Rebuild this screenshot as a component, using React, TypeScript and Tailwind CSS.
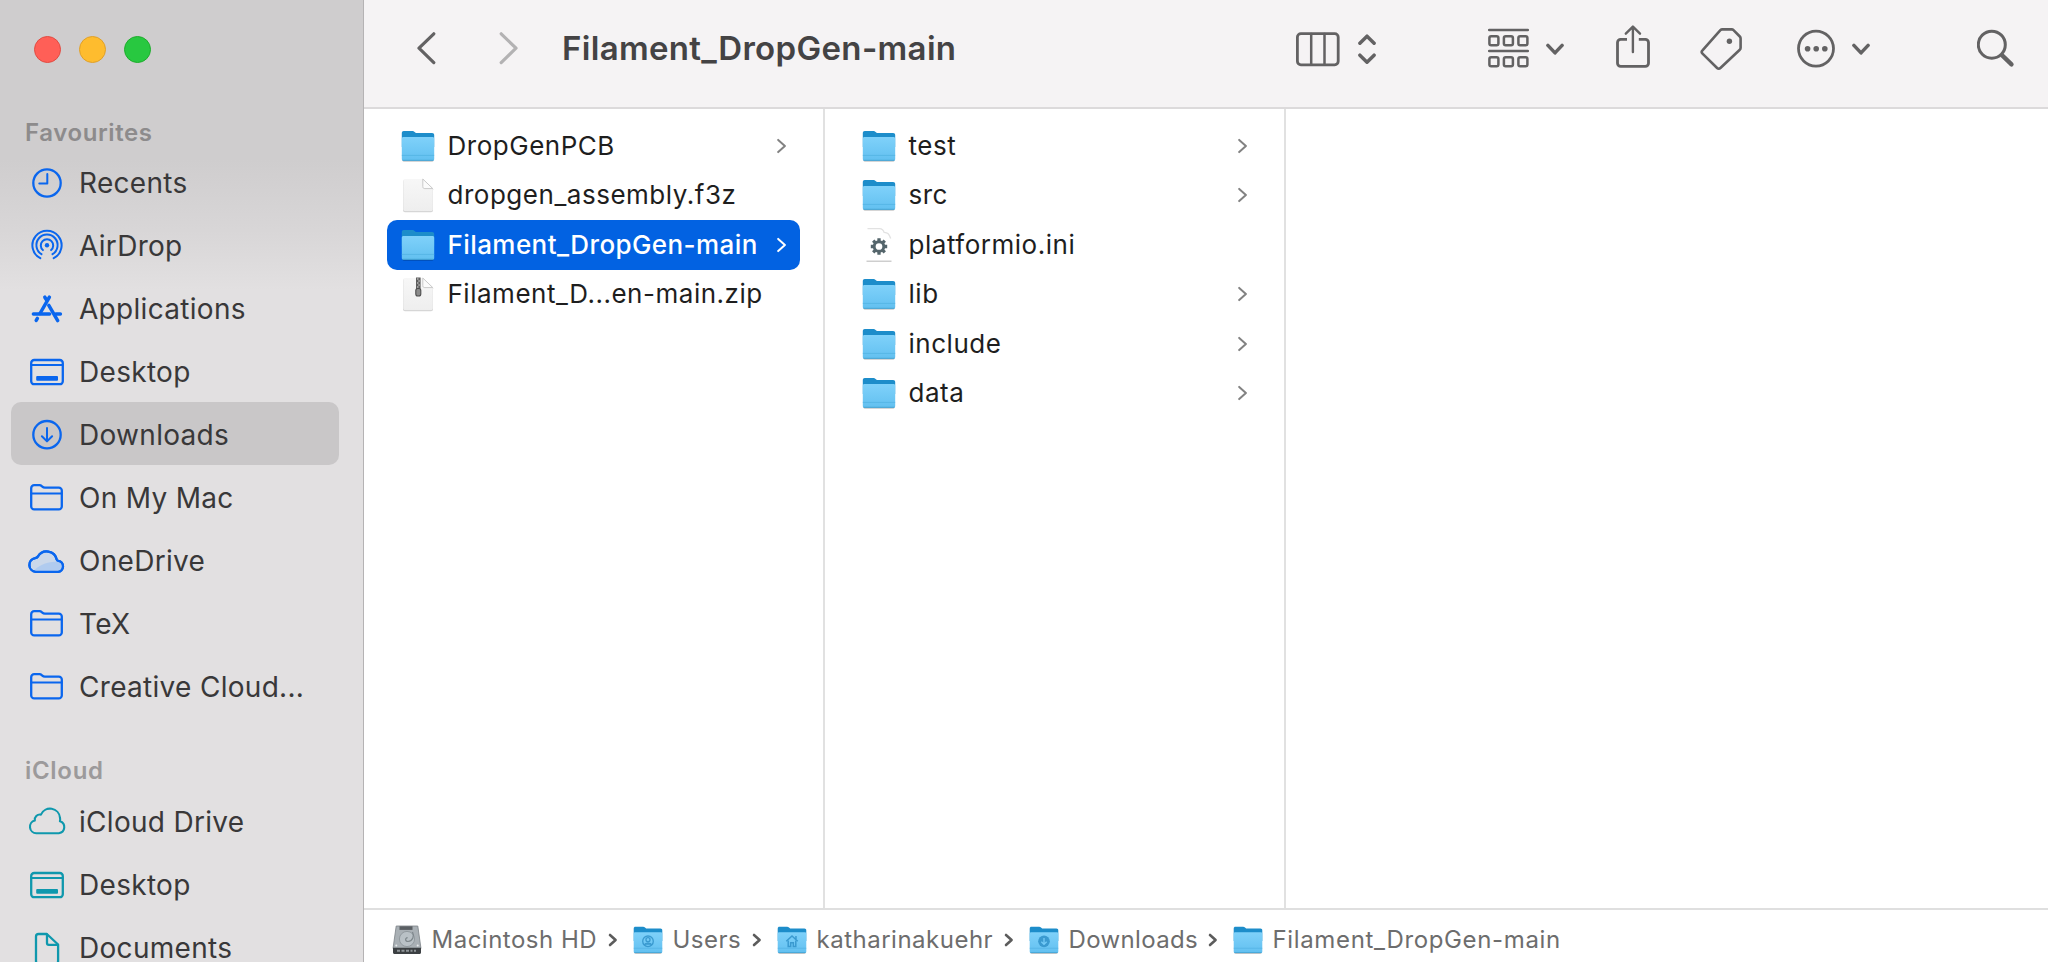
import type { ReactNode } from "react";

const BLUE = "#0a66ee";
const TEAL = "#0f98ad";
const INK = "#636263";

/* ---------- sidebar icons (40 x 40) ---------- */

function SideIcon({ color = BLUE, children }: { color?: string; children: ReactNode }) {
  return (
    <svg
      width="40"
      height="40"
      viewBox="0 0 40 40"
      fill="none"
      stroke={color}
      strokeWidth="2.3"
      strokeLinecap="round"
      strokeLinejoin="round"
      className="shrink-0"
    >
      {children}
    </svg>
  );
}

const RecentsIcon = () => (
  <SideIcon>
    <circle cx="20" cy="20" r="13.7" />
    <path d="M20.3 11v9.6h-8" strokeWidth="2" />
  </SideIcon>
);

const AirDropIcon = () => (
  <SideIcon>
    <g strokeWidth="2">
      <path d="M13.3 32.2A14.6 14.6 0 1 1 26.7 32.2" />
      <path d="M14.5 28.2A10.6 10.6 0 1 1 25.5 28.2" />
      <path d="M15.9 24.1A6.2 6.2 0 1 1 24.1 24.1" />
    </g>
    <circle cx="20" cy="19.3" r="2.2" fill={BLUE} stroke="none" />
  </SideIcon>
);

const ApplicationsIcon = () => (
  <SideIcon>
    <g strokeWidth="3.5">
      <path d="M17.8 8.2l2.3 3.6M22.4 8.2L13 24.5" />
      <path d="M6.4 24.9h16.2M28.8 24.9h4.6" />
      <path d="M21.8 16.4l8.9 15.2M10.4 29.4l-1.2 2" />
    </g>
  </SideIcon>
);

const DesktopIcon = ({ color = BLUE }: { color?: string }) => (
  <SideIcon color={color}>
    <rect x="4.2" y="8" width="31.6" height="24.2" rx="3" />
    <path d="M4.5 13h31" strokeWidth="1.8" />
    <rect x="9.2" y="24" width="21.8" height="4.8" rx="1" fill={color} stroke="none" />
  </SideIcon>
);

const DownloadsIcon = () => (
  <SideIcon>
    <circle cx="20" cy="19.7" r="13.7" />
    <path d="M20 13v13M14.9 21.2l5.1 5.2 5.1-5.2" strokeWidth="2" />
  </SideIcon>
);

const FolderOutlineIcon = () => (
  <SideIcon>
    <path d="M4.200 10.200a3 3 0 0 1 3-3h5.200c1.200 0 1.800.4 2.600 1.100 1 .9 1.600 1.300 3 1.300h13.800a3 3 0 0 1 3 3v15.800a3 3 0 0 1-3 3H7.200a3 3 0 0 1-3-3z" />
    <path d="M4.400 15.400h30.200" strokeWidth="2" />
  </SideIcon>
);

const cloudPath =
  "M8.800 30.800a6.900 6.900 0 0 1-.6-13.700c1.200-.1 1.900-.5 2.700-1.600a10.200 10.200 0 0 1 18.800 3c.3 1 .8 1.300 1.700 1.400a5.500 5.500 0 0 1-.4 10.900z";

const OneDriveIcon = () => (
  <SideIcon>
    <path d={cloudPath} fill="#cbd8ea" />
    <path d="M7.500 29c4-4 9-6.400 14.500-7.500 3-.8 6-1.200 9.500-.5a4.600 4.600 0 0 1-.5 8.900H9z" fill="#b0cbef" stroke="none" />
    <path d={cloudPath} />
  </SideIcon>
);

const ICloudIcon = () => (
  <SideIcon color={TEAL}>
    <path
      d="M9.300 31.200a6.400 6.400 0 0 1-1.500-12.600 5.200 5.200 0 0 1 6.100-6A10 10 0 0 1 33 15.800c.3 1.300.2 2.400-.1 3.500A6.100 6.100 0 0 1 31.900 31.200z"
      strokeWidth="2.100"
    />
  </SideIcon>
);

const DocumentIcon = () => (
  <SideIcon color={TEAL}>
    <path d="M11.600 6h8.200l11.300 10.500v16.600a2.600 2.600 0 0 1-2.600 2.600H11.600A2.600 2.600 0 0 1 9 33.100V8.600A2.600 2.600 0 0 1 11.600 6z" />
    <path d="M20 6.500v8.600a1.800 1.800 0 0 0 1.800 1.800h9" />
  </SideIcon>
);

/* ---------- file icons ---------- */

function FolderIcon({ size = 34, glyph }: { size?: number; glyph?: ReactNode }) {
  return (
    <svg width={size} height={size} viewBox="0 0 34 34" className="shrink-0">
      <rect x="1.500" y="29.500" width="31" height="3.300" rx="1.500" fill="#000" opacity=".22" />
      <path d="M.8 4.200c0-1.500.8-2.200 2-2.200h8.600c1 0 1.600.3 2.200.9l1.300 1.200h16.200c1.300 0 2.100.8 2.100 2v12H.8z" fill="#1d8dca" />
      <path d="M.8 9.700c0-1 .7-1.600 1.700-1.600h29c1 0 1.700.6 1.700 1.600v20.400c0 1.100-.7 1.700-1.700 1.700h-29c-1 0-1.700-.6-1.700-1.700z" fill="url(#folder-face)" />
      <path d="M.8 26.400h32.400" stroke="#4fb1e1" strokeWidth=".7" />
      <path d="M1.500 31.300h31" stroke="#3f9fd0" strokeWidth=".9" />
      {glyph}
    </svg>
  );
}

function PageIcon({ children }: { children?: ReactNode }) {
  return (
    <svg width="34" height="36" viewBox="0 0 34 36" className="shrink-0">
      <path d="M4 2h18.500l9.500 9.500v21c0 1.200-.7 2-2 2H4c-1.200 0-2-.8-2-2V4c0-1.200.8-2 2-2z" fill="#000" opacity=".16" transform="translate(0 .7)" />
      <path d="M4.200 2h18l9.600 9.500v20.800c0 1.100-.7 1.800-1.900 1.800H4.200c-1.100 0-1.900-.7-1.900-1.800V3.800c0-1.100.8-1.800 1.900-1.800z" fill="url(#page-face)" />
      <path d="M21.800 2v7.600c0 1.300.7 2 2 2h8z" fill="#fbfbfb" stroke="#c9c9c9" strokeWidth="1" />
      {children}
    </svg>
  );
}

const ZipIcon = () => (
  <PageIcon>
    <rect x="15" y="1.500" width="4.600" height="13" fill="#5d5d5d" />
    <path d="M16 3h1.500M17.300 5h1.500M16 7h1.500M17.300 9h1.500M16 11h1.500" stroke="#e2e2e2" strokeWidth="1" />
    <rect x="14.800" y="12.500" width="5" height="7.500" rx="2" fill="#8b8b8b" stroke="#4d4d4d" strokeWidth="1.100" />
  </PageIcon>
);

const ConfigIcon = () => (
  <svg width="34" height="36" viewBox="0 0 34 36" className="shrink-0">
    <path d="M5.500 1.600h12c3 .2 4 1.500 4.600 3.700 3.800.2 5 1.800 6.600 6.200" fill="none" stroke="#e2e2e2" strokeWidth="1.300" />
    <path d="M4.500 34.200h25" stroke="#c2c2c2" strokeWidth="1.200" />
    <g fill="none" stroke="#54656b">
      <circle cx="17" cy="19.500" r="4.800" strokeWidth="2.900" />
      <g strokeWidth="3.300">
        <path d="M17 11.300v3M17 24.700v3M8.800 19.500h3M22.200 19.500h3" />
        <path d="M11.200 13.700l2 2M20.800 23.300l2 2M22.800 13.700l-2 2M13.200 23.300l-2 2" />
      </g>
    </g>
  </svg>
);

const DiskIcon = () => (
  <svg width="30" height="30" viewBox="0 0 30 30" className="shrink-0">
    <path d="M4.200 1h21.600l3.200 22.500H1z" fill="#a9b0b5" stroke="#7b8287" strokeWidth=".8" />
    <path d="M1 22.800h28v4.700c0 .9-.6 1.500-1.500 1.500h-25C1.600 29 1 28.400 1 27.500z" fill="#3c4043" />
    <rect x="7.500" y="1.300" width="13" height="3.600" fill="#5a5f63" />
    <circle cx="15" cy="14" r="7.600" fill="#b9c1c6" stroke="#929a9f" strokeWidth="1" />
    <path d="M20.500 7c2 4 .5 9-4.500 9.500-3 0-3.200-3.800-.4-3.800" fill="none" stroke="#7d868b" strokeWidth="1.200" />
    <path d="M5 25.800h3M9.500 25.800h3M14 25.800h3M18.500 25.800h2M22 25.800h2" stroke="#8f9599" strokeWidth="2" />
    <circle cx="4.300" cy="20.500" r="1" fill="#e7eaec" />
    <circle cx="25.700" cy="20.500" r="1" fill="#e7eaec" />
  </svg>
);

const userGlyph = (
  <g fill="none" stroke="#3a9ad0" strokeWidth="1.500">
    <circle cx="17" cy="18.500" r="6" />
    <path d="M12.800 22.500c1.500-2.500 7-2.500 8.400 0" fill="#3a9ad0" />
    <circle cx="17" cy="16.700" r="2.300" />
  </g>
);
const homeGlyph = (
  <g fill="none" stroke="#3a9ad0" strokeWidth="1.700">
    <path d="M10.500 18.500l6.500-6 6.500 6M21.500 12.500v3.500" />
    <path d="M12.700 17.500v7h2.800v-4.300h3v4.300h2.800v-7" />
  </g>
);
const downGlyph = (
  <g>
    <circle cx="17" cy="18.500" r="6.600" fill="#3a9ad0" />
    <path d="M17 14.800v7M14 19l3 3 3-3" fill="none" stroke="#74cbf7" strokeWidth="1.500" />
  </g>
);

/* ---------- toolbar icons (48 tall) ---------- */

function ToolIcon({ width, className = "", color = INK, children }: { width: number; className?: string; color?: string; children: ReactNode }) {
  return (
    <svg
      width={width}
      height="48"
      viewBox={`0 0 ${width} 48`}
      fill="none"
      stroke={color}
      strokeWidth="2.800"
      strokeLinecap="round"
      strokeLinejoin="round"
      className={`shrink-0 ${className}`}
    >
      {children}
    </svg>
  );
}

const DownCaret = ({ className }: { className: string }) => (
  <ToolIcon width={18} className={className}>
    <path d="M1.900 21.400L9 28.900l7.100-7.500" strokeWidth="3.500" />
  </ToolIcon>
);

const RowChevron = ({ selected }: { selected?: boolean }) => (
  <svg width="10" height="16" viewBox="0 0 10 16" fill="none" className="ml-auto shrink-0">
    <path d="M1.200 1.900L7.900 8l-6.700 6.100" stroke={selected ? "#ffffff" : "#828282"} strokeWidth="2" strokeLinecap="round" strokeLinejoin="round" />
  </svg>
);

/* ---------- sidebar ---------- */

type SideEntry = { label: string; icon: ReactNode; active?: boolean };

const favourites: SideEntry[] = [
  { label: "Recents", icon: <RecentsIcon /> },
  { label: "AirDrop", icon: <AirDropIcon /> },
  { label: "Applications", icon: <ApplicationsIcon /> },
  { label: "Desktop", icon: <DesktopIcon /> },
  { label: "Downloads", icon: <DownloadsIcon />, active: true },
  { label: "On My Mac", icon: <FolderOutlineIcon /> },
  { label: "OneDrive", icon: <OneDriveIcon /> },
  { label: "TeX", icon: <FolderOutlineIcon /> },
  { label: "Creative Cloud...", icon: <FolderOutlineIcon /> },
];

const icloud: SideEntry[] = [
  { label: "iCloud Drive", icon: <ICloudIcon /> },
  { label: "Desktop", icon: <DesktopIcon color={TEAL} /> },
  { label: "Documents", icon: <DocumentIcon /> },
];

const SideList = ({ items }: { items: SideEntry[] }) => (
  <ul className="ml-[11px] w-[328px]">
    {items.map((item) => (
      <li
        key={item.label}
        className={`flex h-[63px] items-center rounded-[10px] pt-[2px] pl-4 ${item.active ? "bg-[#c9c7c8]" : ""}`}
      >
        {item.icon}
        <span className="ml-[12px] text-[28px] leading-none tracking-[0.3px] whitespace-nowrap text-[#393839]">{item.label}</span>
      </li>
    ))}
  </ul>
);

const Sidebar = () => (
  <aside className="flex h-full w-[364px] shrink-0 flex-col overflow-hidden border-r border-[#b5b3b4] bg-[linear-gradient(180deg,#cfcdce_0px,#cfcdce_160px,#d8d6d7_230px,#e2e0e1_290px,#e2e0e1_100%)]">
    <div className="flex h-[98px] shrink-0 items-center gap-[18px] pl-[34px]">
      <span className="size-[27px] rounded-full border border-[#e24b41] bg-[#ff5f57]" />
      <span className="size-[27px] rounded-full border border-[#e0a028] bg-[#febc2e]" />
      <span className="size-[27px] rounded-full border border-[#1dad2b] bg-[#28c840]" />
    </div>
    <h2 className="mt-[14px] flex h-[38px] shrink-0 items-center pt-[4px] pl-[25px] text-[24px] leading-none font-semibold tracking-[0.6px] text-[#8d8b8c]">
      Favourites
    </h2>
    <SideList items={favourites} />
    <h2 className="flex h-[72px] shrink-0 items-center pt-[36px] pl-[25px] text-[24px] leading-none font-semibold tracking-[0.7px] text-[#9c9a9b]">
      iCloud
    </h2>
    <SideList items={icloud} />
  </aside>
);

/* ---------- toolbar ---------- */

const Toolbar = () => (
  <header className="flex h-[109px] shrink-0 items-start border-b-2 border-[#dcdadb] bg-[#f5f3f4] pt-6">
    <ToolIcon width={20} className="ml-[52px]">
      <path d="M17.800 9.800L3 24.200l14.800 14.400" strokeWidth="3.200" />
    </ToolIcon>
    <ToolIcon width={20} className="ml-[62.500px]" color="#b3b2b3">
      <path d="M2.200 9.800L17 24.200 2.200 38.600" strokeWidth="3.200" />
    </ToolIcon>
    <h1 className="ml-[43.500px] flex h-[49px] w-[734px] items-center text-[33px] leading-none font-semibold tracking-[0.33px] whitespace-nowrap text-[#444344]">
      Filament_DropGen-main
    </h1>
    <ToolIcon width={44}>
      <rect x="1.400" y="9.600" width="40.800" height="31.200" rx="3.500" />
      <path d="M15.200 10v30.500M28.500 10v30.500" strokeWidth="2.500" />
    </ToolIcon>
    <ToolIcon width={18} className="ml-[18px]">
      <path d="M1.900 19.200L9 12.200l7.100 7M1.900 31.200L9 38.200l7.100-7" strokeWidth="3.500" />
    </ToolIcon>
    <ToolIcon width={42} className="ml-[112px]">
      <path d="M1.200 6h38.600M1.200 27h38.600" strokeWidth="2.500" />
      {[1.4, 15.9, 30.4].map((x) => (
        <g key={x} strokeWidth="2.500">
          <rect x={x} y="12.200" width="9" height="9" rx="1.800" />
          <rect x={x} y="33.300" width="9" height="9" rx="1.800" />
        </g>
      ))}
    </ToolIcon>
    <DownCaret className="ml-[16px]" />
    <ToolIcon width={34} className="ml-[51.500px]">
      <path d="M11 15.400H4.700a3.200 3.200 0 0 0-3.200 3.200v20.600a3.200 3.200 0 0 0 3.200 3.200h24.600a3.200 3.200 0 0 0 3.200-3.200V18.600a3.200 3.200 0 0 0-3.200-3.200H22.800" strokeLinecap="butt" />
      <path d="M16.900 28V3.500M9.800 9.700l7.100-7.100 7.100 7.100" strokeWidth="2.400" />
    </ToolIcon>
    <ToolIcon width={44} className="ml-[50px]">
      <path d="M22.300 5.400h9.400c.8 0 1.300.2 1.800.7l6.300 6.400c.6.600.8 1.100.8 1.900v9.400c0 .8-.2 1.400-.8 1.900L20.400 44c-1 1-2.300 1-3.300 0L2.500 29.600c-1-1-1-2.300 0-3.300L20.400 6.200c.600-.600 1.100-.800 1.900-.800z" strokeWidth="2.600" />
      <circle cx="29.400" cy="17.200" r="2.700" fill={INK} stroke="none" />
    </ToolIcon>
    <ToolIcon width={38} className="ml-[53px]">
      <circle cx="19" cy="24.600" r="17.500" />
      <g fill={INK} stroke="none">
        <circle cx="10.600" cy="24.700" r="2.800" />
        <circle cx="19.200" cy="24.700" r="2.800" />
        <circle cx="27.800" cy="24.700" r="2.800" />
      </g>
    </ToolIcon>
    <DownCaret className="ml-[17px]" />
    <ToolIcon width={38} className="ml-[107.500px]">
      <circle cx="14.800" cy="20.700" r="13.500" strokeWidth="3" />
      <path d="M25.200 31.400l9.300 9" strokeWidth="4.300" />
    </ToolIcon>
  </header>
);

/* ---------- columns ---------- */

type Kind = "folder" | "page" | "zip" | "config";
type FileEntry = { name: string; kind: Kind; selected?: boolean };

const firstColumn: FileEntry[] = [
  { name: "DropGenPCB", kind: "folder" },
  { name: "dropgen_assembly.f3z", kind: "page" },
  { name: "Filament_DropGen-main", kind: "folder", selected: true },
  { name: "Filament_D...en-main.zip", kind: "zip" },
];

const secondColumn: FileEntry[] = [
  { name: "test", kind: "folder" },
  { name: "src", kind: "folder" },
  { name: "platformio.ini", kind: "config" },
  { name: "lib", kind: "folder" },
  { name: "include", kind: "folder" },
  { name: "data", kind: "folder" },
];

const fileIcons: Record<Kind, ReactNode> = {
  folder: <FolderIcon />,
  page: <PageIcon />,
  zip: <ZipIcon />,
  config: <ConfigIcon />,
};

const Column = ({ files }: { files: FileEntry[] }) => (
  <ul className="h-full w-[461px] shrink-0 border-r-2 border-[#e1e1e1] pt-[12px] pl-[23px]">
    {files.map((file) => (
      <li
        key={file.name}
        className={`flex h-[49.500px] w-[413px] items-center rounded-[10px] pr-[13px] pl-[14px] ${
          file.selected ? "bg-[#0262e2] font-medium text-white" : "text-[#1e1e1e]"
        }`}
      >
        {fileIcons[file.kind]}
        <span className={`ml-[12.500px] text-[26px] leading-none whitespace-nowrap ${file.selected ? "tracking-[0.42px]" : "tracking-[0.52px]"}`}>{file.name}</span>
        {file.kind === "folder" && <RowChevron selected={file.selected} />}
      </li>
    ))}
  </ul>
);

/* ---------- path bar ---------- */

const crumbs = [
  { name: "Macintosh HD", icon: <DiskIcon />, box: "w-[241px]", tracking: "tracking-[0.5px]" },
  { name: "Users", icon: <FolderIcon size={30} glyph={userGlyph} />, box: "w-[144px]", tracking: "tracking-[0.5px]" },
  { name: "katharinakuehr", icon: <FolderIcon size={30} glyph={homeGlyph} />, box: "w-[252px]", tracking: "tracking-[0.5px]" },
  { name: "Downloads", icon: <FolderIcon size={30} glyph={downGlyph} />, box: "w-[204px]", tracking: "tracking-[0.35px]" },
  { name: "Filament_DropGen-main", icon: <FolderIcon size={30} />, box: "", tracking: "tracking-[0.65px]" },
];

const PathBar = () => (
  <footer className="flex h-[54px] shrink-0 items-center border-t-2 border-[#dfdfdf] bg-white pt-[8px] pl-[28px]">
    {crumbs.map((crumb, i) => (
      <div key={crumb.name} className={`flex items-center ${crumb.box}`}>
        {crumb.icon}
        <span className={`ml-[9.500px] text-[24px] leading-none whitespace-nowrap text-[#6d6d6d] ${crumb.tracking}`}>{crumb.name}</span>
        {i < crumbs.length - 1 && (
          <svg width="10" height="14" viewBox="0 0 10 14" fill="none" className="mr-[15px] ml-auto shrink-0">
            <path d="M2 2l5.600 5L2 12" stroke="#5c5c5c" strokeWidth="2.600" strokeLinecap="round" strokeLinejoin="round" />
          </svg>
        )}
      </div>
    ))}
  </footer>
);

export default function App() {
  return (
    <div className="flex h-[962px] w-[2048px] overflow-hidden bg-white font-[Inter,sans-serif]">
      <svg width="0" height="0" className="absolute">
        <defs>
          <linearGradient id="folder-face" x1="0" y1="0" x2="0" y2="1">
            <stop offset="0" stopColor="#7fd1fa" />
            <stop offset="1" stopColor="#62c0f0" />
          </linearGradient>
          <linearGradient id="page-face" x1="0" y1="0" x2="0" y2="1">
            <stop offset="0" stopColor="#f7f7f7" />
            <stop offset="1" stopColor="#eeeeee" />
          </linearGradient>
        </defs>
      </svg>
      <Sidebar />
      <main className="flex min-w-0 grow flex-col">
        <Toolbar />
        <div className="flex min-h-0 grow">
          <Column files={firstColumn} />
          <Column files={secondColumn} />
        </div>
        <PathBar />
      </main>
    </div>
  );
}
